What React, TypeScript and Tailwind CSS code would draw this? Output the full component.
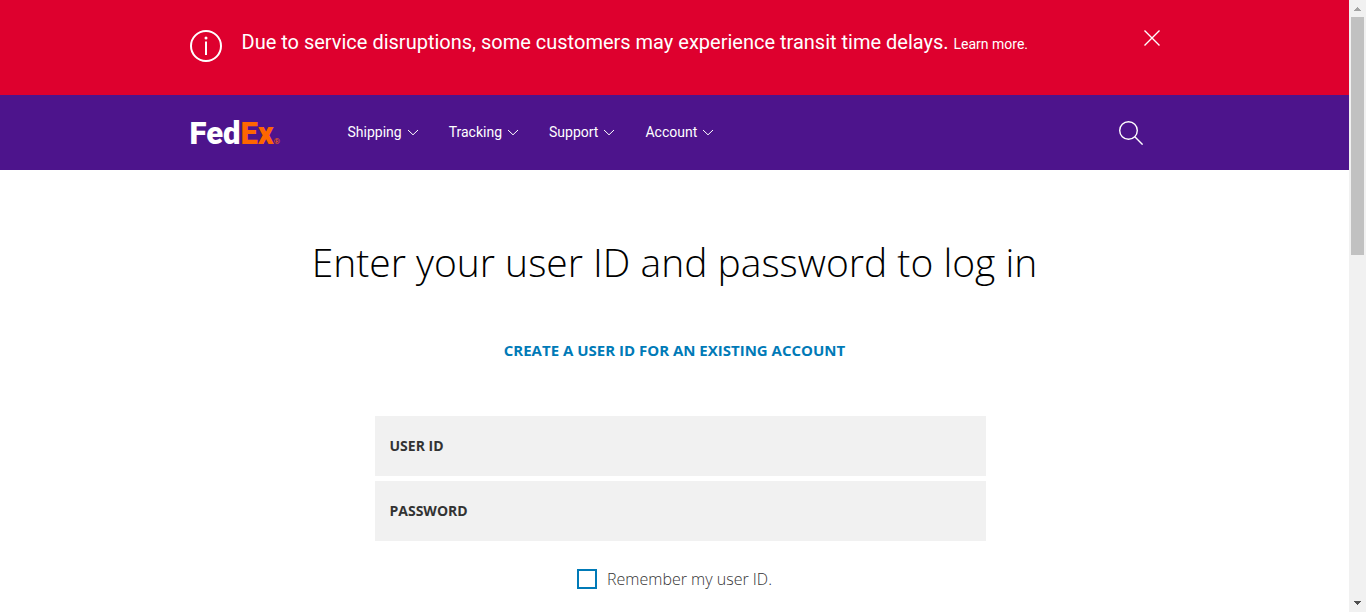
import React from "react";

const navItems = ["Shipping", "Tracking", "Support", "Account"];

function InfoIcon() {
  return (
    <svg className="size-8 shrink-0" viewBox="0 0 32 32" fill="none" stroke="#fff" strokeWidth="2" aria-hidden="true">
      <circle cx="16" cy="16" r="15" />
      <path d="M16 11.5V25" />
      <circle cx="16" cy="8" r="1.5" fill="#fff" stroke="none" />
    </svg>
  );
}

function CloseIcon() {
  return (
    <svg className="size-4" viewBox="0 0 16 16" fill="none" stroke="#fff" strokeWidth="1.4" aria-hidden="true">
      <path d="M0.5 0.5L15.5 15.5M15.5 0.5L0.5 15.5" />
    </svg>
  );
}

function ChevronIcon() {
  return (
    <svg className="h-2 w-3" viewBox="0 0 12 8" fill="none" stroke="#fff" strokeWidth="1" aria-hidden="true">
      <path d="M1 2L6 6.8L11 2" />
    </svg>
  );
}

function SearchIcon() {
  return (
    <svg className="size-6" viewBox="0 0 24 24" fill="none" stroke="#fff" strokeWidth="1.4" aria-hidden="true">
      <circle cx="9.5" cy="9.5" r="8.8" />
      <path d="M15.8 15.8L23.6 23.6" />
    </svg>
  );
}

function Banner() {
  return (
    <section className="bg-[#de002e] text-white" aria-label="Service alert">
      <div className="mx-auto flex h-[95px] max-w-[970px] items-start pt-[30px]">
        <InfoIcon />
        <p className="ml-5 flex-1 text-xl leading-6">
          Due to service disruptions, some customers may experience transit time delays.{" "}
          <a href="#learn-more" className="text-sm">Learn more.</a>
        </p>
        <button type="button" aria-label="Close alert">
          <CloseIcon />
        </button>
      </div>
    </section>
  );
}

function Header() {
  return (
    <header className="bg-[#4d148c] text-white">
      <div className="mx-auto flex h-[75px] max-w-[970px] items-center pb-px">
        <a href="#home" className="flex w-[158px] items-end pt-1 leading-8" aria-label="FedEx home">
          <span className="text-[31px] font-black">Fed</span>
          <span className="text-[31px] font-black text-[#ff6600]">Ex</span>
          <span className="text-[8px] leading-4 text-[#ff6600]">®</span>
        </a>
        <nav className="flex gap-[30px]" aria-label="Main">
          {navItems.map((item) => (
            <button key={item} type="button" className="flex items-center gap-[5px] text-sm leading-5">
              {item}
              <ChevronIcon />
            </button>
          ))}
        </nav>
        <button type="button" className="mr-[17px] ml-auto pt-px" aria-label="Search">
          <SearchIcon />
        </button>
      </div>
    </header>
  );
}

function Field({ id, label, type }: { id: string; label: string; type: string }) {
  return (
    <div className="flex h-[60px] items-center bg-[#f1f1f1] px-[15px]">
      <label htmlFor={id} className="text-sm font-bold text-[#333]">{label}</label>
      <input id={id} type={type} className="h-full min-w-0 flex-1 bg-transparent pl-4 outline-none" />
    </div>
  );
}

function LoginForm() {
  return (
    <main className="font-['Open_Sans','Noto_Sans',sans-serif]">
      <h1 className="pt-16 text-center text-[39px] leading-[56px] font-light text-black">
        Enter your user ID and password to log in
      </h1>
      <p className="mt-[50px] text-center text-[15px] leading-5 font-bold">
        <a href="#create" className="text-[#007ab7]">CREATE A USER ID FOR AN EXISTING ACCOUNT</a>
      </p>
      <form className="mx-auto mt-14 box-content max-w-[611px] pl-[11px]">
        <div className="flex flex-col gap-[5px]">
          <Field id="user-id" label="USER ID" type="text" />
          <Field id="password" label="PASSWORD" type="password" />
        </div>
        <label className="mt-7 mr-[11px] flex items-center justify-center gap-[10px] text-base leading-5 font-light text-[#333]">
          <input type="checkbox" className="size-5 appearance-none border-2 border-[#007ab7] bg-white checked:bg-[#007ab7]" />
          Remember my user ID.
        </label>
      </form>
    </main>
  );
}

function ScrollBar() {
  return (
    <div className="sticky top-0 flex h-screen w-[17px] shrink-0 flex-col items-center bg-[#f1f1f1]" aria-hidden="true">
      <svg className="size-[17px] shrink-0" viewBox="0 0 17 17" shapeRendering="crispEdges">
        <path d="M5 11H12L8.5 7Z" fill="#a3a3a3" />
      </svg>
      <div className="w-[13px] flex-[238] bg-[#c1c1c1]" />
      <div className="flex-[340]" />
      <svg className="size-[17px] shrink-0" viewBox="0 0 17 17" shapeRendering="crispEdges">
        <path d="M5 6H12L8.5 10Z" fill="#505050" />
      </svg>
    </div>
  );
}

export default function App() {
  return (
    <div className="flex min-h-screen bg-white font-[Roboto,sans-serif]">
      <div className="min-w-0 flex-1">
        <Banner />
        <Header />
        <LoginForm />
      </div>
      <ScrollBar />
    </div>
  );
}
